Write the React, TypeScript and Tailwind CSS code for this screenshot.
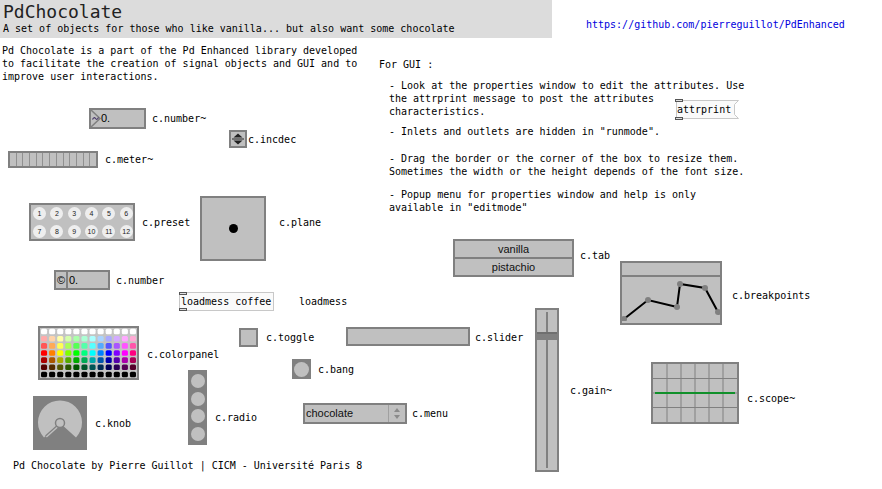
import React from "react";

const HUES = [0, 30, 60, 90, 120, 150, 180, 210, 240, 270, 300, 330];
const LIGHTS = [100, 83.3, 66.7, 50, 33.3, 16.7, 0];

function Inlets() {
  return (
    <>
      <div className="absolute left-[-1px] top-[-1px] w-[8px] h-[3px] border border-[#555] bg-[#e0e0e0]" />
      <div className="absolute left-[-1px] bottom-[-1px] w-[8px] h-[3px] border border-[#555] bg-[#e0e0e0]" />
    </>
  );
}

function ColorPanel() {
  const cw = 97 / 12;
  const ch = 50 / 7;
  return (
    <svg width="101" height="54" className="block">
      <rect x="1" y="1" width="99" height="52" fill="#c4c4c4" stroke="#808080" strokeWidth="2" />
      {LIGHTS.map((l, r) =>
        HUES.map((h, c) => (
          <rect
            key={`${r}-${c}`}
            x={2 + c * cw + 1}
            y={2 + r * ch + 0.8}
            width={cw - 2}
            height={ch - 1.6}
            rx="1.5"
            fill={`hsl(${h}, 100%, ${l}%)`}
          />
        ))
      )}
    </svg>
  );
}

function Knob() {
  return (
    <svg width="54" height="54" className="block">
      <rect width="54" height="54" fill="#808080" />
      <path d="M27 27 L11 41.5 A22 22 0 1 1 43 41.5 Z" fill="#c0c0c0" />
      <line x1="27" y1="27" x2="12.5" y2="40" stroke="#c0c0c0" strokeWidth="4" />
      <line x1="27" y1="27" x2="12.5" y2="40" stroke="#808080" strokeWidth="1.2" />
      <circle cx="27" cy="27" r="4.5" fill="#c0c0c0" stroke="#808080" strokeWidth="1.5" />
    </svg>
  );
}

const BP: [number, number][] = [
  [2, 42],
  [26, 23],
  [55, 30],
  [58, 7],
  [83, 11],
  [96, 35],
];

export default function App() {
  const presets = [1, 2, 3, 4, 5, 6, 7, 8, 9, 10, 11, 12];
  return (
    <div className="relative w-[882px] h-[489px] overflow-hidden bg-white font-['DejaVu_Sans_Mono',monospace] text-[10px] leading-[13px] text-black">
      {/* Header */}
      <div className="absolute left-0 top-0 w-[552px] h-[38px] bg-[#dcdcdc] flex flex-col pl-[3px] pt-[1px]">
        <div className="text-[18px] leading-[21px] text-[#222]">PdChocolate</div>
        <div>A set of objects for those who like vanilla... but also want some chocolate</div>
      </div>
      <div className="absolute left-[586px] top-[18px] text-[#0000dd]">https://github.com/pierreguillot/PdEnhanced</div>

      {/* Description */}
      <div className="absolute left-[2px] top-[44px] flex flex-col">
        <div>Pd Chocolate is a part of the Pd Enhanced library developed</div>
        <div>to facilitate the creation of signal objects and GUI and to</div>
        <div>improve user interactions.</div>
      </div>

      {/* Right notes */}
      <div className="absolute left-[379px] top-[58px] flex flex-col whitespace-pre">
        <div>For GUI :</div>
        <div className="mt-[8px] pl-[10px] flex flex-col">
          <div>- Look at the properties window to edit the attributes. Use</div>
          <div>the attrprint message to post the attributes</div>
          <div>characteristics.</div>
          <div className="mt-[7px]">{'- Inlets and outlets are hidden in "runmode".'}</div>
          <div className="mt-[14px]">- Drag the border or the corner of the box to resize them.</div>
          <div>Sometimes the width or the height depends of the font size.</div>
          <div className="mt-[10px]">- Popup menu for properties window and help is only</div>
          <div>{'available in "editmode"'}</div>
        </div>
      </div>

      {/* attrprint message */}
      <div className="absolute left-[676px] top-[100px] w-[63px] h-[19px]">
        <svg width="63" height="19" className="absolute left-0 top-0">
          <polyline points="0.5,0.5 62.5,0.5 58.5,4.5 58.5,14.5 62.5,18.5 0.5,18.5 0.5,0.5" fill="#fafafa" stroke="#c8c8c8" strokeWidth="1" />
        </svg>
        <div className="relative pl-[1px] pt-[3px]">attrprint</div>
        <Inlets />
      </div>

      {/* c.number~ */}
      <div className="absolute left-[89px] top-[108px] flex items-center gap-[6px]">
        <div className="relative w-[57px] h-[21px] border-2 border-[#808080] bg-[#c0c0c0]">
          <svg width="14" height="17" className="absolute left-0 top-0">
            <polyline points="0,0 9,8.5 0,17" fill="none" stroke="#808080" strokeWidth="1.5" />
            <path d="M1.5 9.5 Q3 6.5 4.5 8.5 T7.5 7.5" fill="none" stroke="#4a3a6a" strokeWidth="1.2" />
          </svg>
          <span className="absolute left-[10px] top-[2px] font-['Liberation_Sans',sans-serif] text-[11px] leading-[13px]">0.</span>
        </div>
        <span>c.number~</span>
      </div>

      {/* c.incdec */}
      <div className="absolute left-[229px] top-[130px] flex items-center gap-[1px]">
        <div className="w-[18px] h-[18px] border-2 border-[#808080] bg-[#c0c0c0]">
          <svg width="14" height="14" className="block">
            <polygon points="2.5,5.5 7,1.5 11.5,5.5" fill="#222" />
            <line x1="1" y1="7" x2="13" y2="7" stroke="#222" strokeWidth="1" />
            <polygon points="2.5,8.5 7,12.5 11.5,8.5" fill="#222" />
          </svg>
        </div>
        <span>c.incdec</span>
      </div>

      {/* c.meter~ */}
      <div className="absolute left-[8px] top-[151px] flex items-center gap-[7px]">
        <div className="w-[90px] h-[17px] border-2 border-[#808080] bg-[#c0c0c0] flex">
          {Array.from({ length: 13 }).map((_, i) => (
            <div key={i} className="flex-1 border-r border-[#909090] last:border-r-0" />
          ))}
        </div>
        <span>c.meter~</span>
      </div>

      {/* c.preset */}
      <div className="absolute left-[29px] top-[203px] flex items-center gap-[7px]">
        <div className="w-[106px] h-[38px] border-2 border-[#808080] bg-[#c0c0c0] grid grid-cols-6 gap-x-[4px] gap-y-[3px] pl-[2px] pt-[2px]">
          {presets.map((n) => (
            <div
              key={n}
              className="w-[13px] h-[13px] rounded-full bg-[#eeeeee] flex items-center justify-center font-['Liberation_Sans',sans-serif] text-[7px] leading-none text-[#222]"
            >
              {n}
            </div>
          ))}
        </div>
        <span>c.preset</span>
      </div>

      {/* c.plane */}
      <div className="absolute left-[200px] top-[196px] flex items-start gap-[13px]">
        <div className="w-[66px] h-[65px] border-2 border-[#808080] bg-[#c0c0c0] flex items-center justify-center">
          <div className="w-[9px] h-[9px] rounded-full bg-black" />
        </div>
        <span className="mt-[20px]">c.plane</span>
      </div>

      {/* c.number */}
      <div className="absolute left-[54px] top-[270px] flex items-center gap-[6px]">
        <div className="w-[56px] h-[20px] border-2 border-[#808080] bg-[#c0c0c0] flex">
          <div className="w-[12px] border-r-2 border-[#808080] flex items-center justify-center font-['Liberation_Sans',sans-serif] text-[11px] leading-none">©</div>
          <div className="pl-[1px] pt-[1px] font-['Liberation_Sans',sans-serif] text-[11px] leading-[14px]">0.</div>
        </div>
        <span>c.number</span>
      </div>

      {/* loadmess coffee */}
      <div className="absolute left-[179px] top-[292px] flex items-center gap-[25px]">
        <div className="relative w-[95px] h-[19px] border border-[#c8c8c8] bg-[#fafafa] pl-[1px] pt-[2px]">
          loadmess coffee
          <Inlets />
        </div>
        <span>loadmess</span>
      </div>

      {/* c.colorpanel */}
      <div className="absolute left-[38px] top-[326px] flex items-center gap-[8px]">
        <ColorPanel />
        <span className="mt-[3px]">c.colorpanel</span>
      </div>

      {/* c.knob */}
      <div className="absolute left-[33px] top-[396px] flex items-center gap-[8px]">
        <Knob />
        <span>c.knob</span>
      </div>

      {/* c.radio */}
      <div className="absolute left-[188px] top-[370px] flex items-start gap-[8px]">
        <div className="w-[19px] h-[75px] bg-[#808080] flex flex-col items-center justify-around py-[2px]">
          {[0, 1, 2, 3].map((i) => (
            <div key={i} className="w-[14px] h-[14px] rounded-full bg-[#c0c0c0]" />
          ))}
        </div>
        <span className="mt-[41px]">c.radio</span>
      </div>

      {/* c.toggle */}
      <div className="absolute left-[239px] top-[328px] flex items-center gap-[8px]">
        <div className="w-[19px] h-[19px] border-2 border-[#808080] bg-[#c0c0c0]" />
        <span>c.toggle</span>
      </div>

      {/* c.slider */}
      <div className="absolute left-[346px] top-[327px] flex items-center gap-[5px]">
        <div className="w-[124px] h-[19px] border-2 border-[#808080] bg-[#c0c0c0]" />
        <span className="mt-[2px]">c.slider</span>
      </div>

      {/* c.bang */}
      <div className="absolute left-[292px] top-[359px] flex items-center gap-[7px]">
        <div className="w-[19px] h-[20px] bg-[#808080] flex items-center justify-center">
          <div className="w-[15px] h-[15px] rounded-full bg-[#c0c0c0]" />
        </div>
        <span>c.bang</span>
      </div>

      {/* c.menu */}
      <div className="absolute left-[303px] top-[403px] flex items-center gap-[5px]">
        <div className="w-[104px] h-[21px] border-2 border-[#808080] bg-[#c0c0c0] flex">
          <div className="flex-1 pl-[1px] pt-[1px] font-['Liberation_Sans',sans-serif] text-[11px] leading-[15px] text-[#111]">chocolate</div>
          <div className="w-[17px] border-l border-[#a0a0a0] flex items-center justify-center">
            <svg width="8" height="13">
              <polygon points="1,5 4,1 7,5" fill="#8a8a8a" />
              <polygon points="1,8 4,12 7,8" fill="#8a8a8a" />
            </svg>
          </div>
        </div>
        <span>c.menu</span>
      </div>

      {/* c.tab */}
      <div className="absolute left-[453px] top-[239px] flex items-start gap-[6px]">
        <div className="w-[121px] h-[38px] border-2 border-[#808080] bg-[#c0c0c0] flex flex-col font-['Liberation_Sans',sans-serif] text-[11px] text-[#111]">
          <div className="flex-1 border-b-2 border-[#808080] flex items-center justify-center leading-none">vanilla</div>
          <div className="flex-1 flex items-center justify-center leading-none">pistachio</div>
        </div>
        <span className="mt-[10px]">c.tab</span>
      </div>

      {/* c.breakpoints */}
      <div className="absolute left-[620px] top-[261px] flex items-start gap-[10px]">
        <div className="w-[102px] h-[64px] border-2 border-[#808080] bg-[#c0c0c0] flex flex-col">
          <div className="h-[14px] border-b-2 border-[#808080]" />
          <svg width="98" height="44" className="block">
            <polyline points={BP.map((p) => p.join(",")).join(" ")} fill="none" stroke="#000" strokeWidth="2" />
            {BP.map(([x, y], i) => (
              <circle key={i} cx={x} cy={y} r="3" fill="#808080" />
            ))}
          </svg>
        </div>
        <span className="mt-[28px]">c.breakpoints</span>
      </div>

      {/* c.gain~ */}
      <div className="absolute left-[535px] top-[308px] flex items-start gap-[11px]">
        <div className="w-[24px] h-[164px] border-2 border-[#808080] bg-[#c0c0c0] flex flex-col items-center">
          <div className="h-[20px] w-[2px] bg-[#808080] mt-[2px]" />
          <div className="h-[8px] w-full bg-[#808080] border-t-2 border-[#6f6f6f]" />
          <div className="flex-1 w-[2px] bg-[#808080] mb-[2px]" />
        </div>
        <span className="mt-[76px]">c.gain~</span>
      </div>

      {/* c.scope~ */}
      <div className="absolute left-[651px] top-[362px] flex items-start gap-[8px]">
        <div className="w-[88px] h-[62px] border-2 border-[#808080] bg-[#c0c0c0]">
          <svg width="84" height="58" className="block">
            {[1, 2, 3, 4, 5].map((i) => (
              <line key={`v${i}`} x1={i * 14} y1="0" x2={i * 14} y2="58" stroke="#808080" strokeWidth="1" />
            ))}
            {[1, 2, 3].map((i) => (
              <line key={`h${i}`} x1="0" y1={i * 14.5} x2="84" y2={i * 14.5} stroke="#808080" strokeWidth="1" />
            ))}
            <line x1="2" y1="29" x2="82" y2="29" stroke="#10902a" strokeWidth="2" />
          </svg>
        </div>
        <span className="mt-[30px]">c.scope~</span>
      </div>

      {/* Footer */}
      <div className="absolute left-[13px] top-[459px]">
        Pd Chocolate by Pierre Guillot | CICM - Université Paris 8
      </div>
    </div>
  );
}
